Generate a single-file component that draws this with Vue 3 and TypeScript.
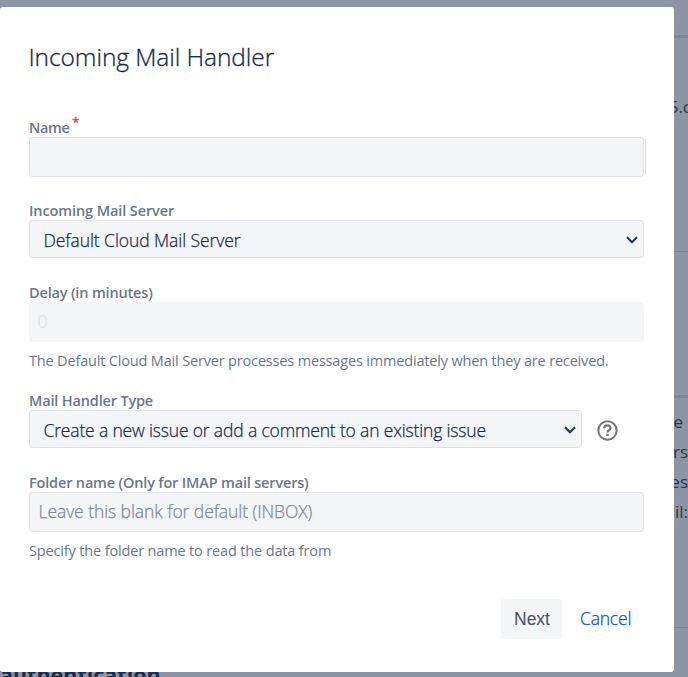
<script setup lang="ts">
import { ref } from 'vue'

const name = ref('')
const server = ref('Default Cloud Mail Server')
const handler = ref('Create a new issue or add a comment to an existing issue')
const folder = ref('')
const backdropLines: string[] = ['e', 'ers', 'es', 'ail:']
</script>

<template>
  <div class="screen">
    <div class="page">
      <div class="band head"></div>
      <div class="band first"><span>5.c</span></div>
      <div class="band second"></div>
      <div class="band third">
        <span v-for="(line, i) in backdropLines" :key="line" :class="'l' + i">{{ line }}</span>
      </div>
      <div class="band last"><strong>authentication</strong></div>
    </div>

    <section class="dialog" role="dialog">
      <h1>Incoming Mail Handler</h1>

      <div class="field name-field">
        <label>Name<sup>*</sup></label>
        <div class="name-row"><input v-model="name" class="control" type="text" /><i class="edge"></i></div>
      </div>

      <div class="field">
        <label class="t-server">Incoming Mail Server</label>
        <div class="control select">
          <span>{{ server }}</span>
          <svg class="chevron" viewBox="0 0 12 8"><path d="M1 1.2 6 6.2 11 1.2" /></svg>
        </div>
      </div>

      <div class="field delay">
        <label>Delay (in minutes)</label>
        <div class="control disabled">0</div>
        <p>The Default Cloud Mail Server processes messages immediately when they are received.</p>
      </div>

      <div class="field">
        <label>Mail Handler Type</label>
        <div class="row">
          <div class="control select long">
            <span>{{ handler }}</span>
            <svg class="chevron" viewBox="0 0 12 8"><path d="M1 1.2 6 6.2 11 1.2" /></svg>
          </div>
          <svg class="help" viewBox="0 0 21 21">
            <circle cx="10.5" cy="10.5" r="9.2" />
            <path d="M7.4 8.2C7.5 6.2 8.7 5.4 10.5 5.4s2.9 1 2.9 2.5c0 1.2-.7 1.8-1.5 2.4-.9.6-1.3 1.1-1.3 2.2" />
            <rect x="9.3" y="13.7" width="2.5" height="2.3" />
          </svg>
        </div>
      </div>

      <div class="field">
        <label>Folder name (Only for IMAP mail servers)</label>
        <input v-model="folder" class="control" type="text" placeholder="Leave this blank for default (INBOX)" />
        <p class="t-specify">Specify the folder name to read the data from</p>
      </div>

      <footer>
        <button type="button" class="next">Next</button>
        <a class="cancel">Cancel</a>
      </footer>
    </section>
  </div>
</template>

<style>
body { margin: 0; overflow: hidden; }
</style>

<style scoped>
* { box-sizing: border-box; }
.screen {
  position: relative;
  width: 688px;
  height: 677px;
  overflow: hidden;
  background: #8c94a5;
  font-family: "Open Sans", "Noto Sans", sans-serif;
  color: #172b4d;
}
.page { display: flex; flex-direction: column; height: 677px; }
.band {
  display: flex;
  flex-direction: column;
  flex: none;
  align-items: flex-end;
  border-bottom: 1px solid #7b8596;
  font-size: 17px;
  line-height: 30px;
  color: #2c374c;
  white-space: nowrap;
}
.head { height: 38px; border-bottom-width: 3px; }
.first { height: 214px; padding-top: 54px; }
.first span { margin-right: -3px; }
.second { height: 146px; border-bottom-width: 3px; }
.third { height: 230px; padding-top: 9px; }
.l0 { margin-right: 5px; }
.last { height: 49px; border: 0; align-items: flex-start; padding-top: 32px; }
.last strong { font-size: 21.5px; color: #172b4d; }
.dialog {
  position: absolute;
  top: 7px;
  left: 0;
  width: 674px;
  height: 665px;
  padding: 30px 30px 0 29px;
  border-radius: 3px;
  background: #fff;
}
h1 {
  margin: 0 0 0 -0.5px;
  height: 79px;
  font-size: 24.5px;
  line-height: 40px;
  font-weight: 300;
  letter-spacing: -0.07px;
  -webkit-text-stroke: 0.3px currentColor;
  white-space: nowrap;
}
label {
  display: block;
  height: 20px;
  padding-top: 1px;
  font-size: 14.5px;
  line-height: 20px;
  font-weight: 600;
  letter-spacing: -0.17px;
  color: #6b778c;
  white-space: nowrap;
}
.t-server { letter-spacing: -0.1px; }
.field { margin-bottom: 24px; }
.name-field { margin-bottom: 23px; padding-top: 1px; }
.name-field label { display: flex; letter-spacing: -0.4px; }
sup { margin: -3px 0 0 3px; font-size: 13px; line-height: 14px; color: #d9503f; -webkit-text-stroke: 0.3px currentColor; }
.name-row { display: flex; gap: 1px; width: 617px; }
.edge { width: 1px; height: 36px; margin-top: 2px; background: #dbe3f3; }
.control {
  display: block;
  width: 615px;
  height: 40px;
  border: 1px solid #dfe1e6;
  border-radius: 3.5px;
  background: #f4f5f7;
  padding: 0 9px 2px 8.5px;
  outline: 0;
  font-family: inherit;
  font-size: 17.5px;
  font-weight: 300;
  line-height: 36px;
  letter-spacing: -0.07px;
  -webkit-text-stroke: 0.25px currentColor;
  color: #172b4d;
  white-space: nowrap;
}
.control::placeholder { color: #7f899c; opacity: 1; }
.select {
  display: flex;
  align-items: center;
  justify-content: space-between;
  height: 38px;
  padding: 1px 5px 0 13.5px;
}
.long { letter-spacing: -0.16px; }
.chevron { width: 12px; height: 8px; fill: none; stroke: #253858; stroke-width: 2.1; }
.disabled { border-color: #f4f5f7; padding-left: 7.5px; color: #dfe1e6; }
p {
  margin: 8px 0 0;
  height: 22px;
  font-size: 14.5px;
  line-height: 22px;
  letter-spacing: -0.17px;
  color: #6b778c;
  white-space: nowrap;
}
.t-specify { letter-spacing: -0.15px; }
.delay { margin-bottom: 18px; }
.row { display: flex; align-items: center; gap: 14.5px; }
.row .select { width: 553px; }
.help { width: 21px; height: 21px; margin-top: 3px; fill: none; stroke: #777; stroke-width: 2; }
.help path { stroke-width: 2.4; }
.help rect { fill: #777; stroke: none; }
footer { display: flex; align-items: center; gap: 18px; padding: 13px 0 0 472px; }
.next {
  width: 61px;
  height: 40px;
  padding: 0 0 0 1px;
  border: 0;
  border-radius: 3px;
  background: #f4f5f7;
  font: 400 17.5px/40px "Liberation Sans", Arial, sans-serif;
  color: #42526e;
}
.cancel {
  height: 40px;
  font-size: 17.5px;
  font-weight: 300;
  line-height: 38px;
  letter-spacing: -0.2px;
  color: #0052cc;
  -webkit-text-stroke: 0.25px currentColor;
}
</style>
